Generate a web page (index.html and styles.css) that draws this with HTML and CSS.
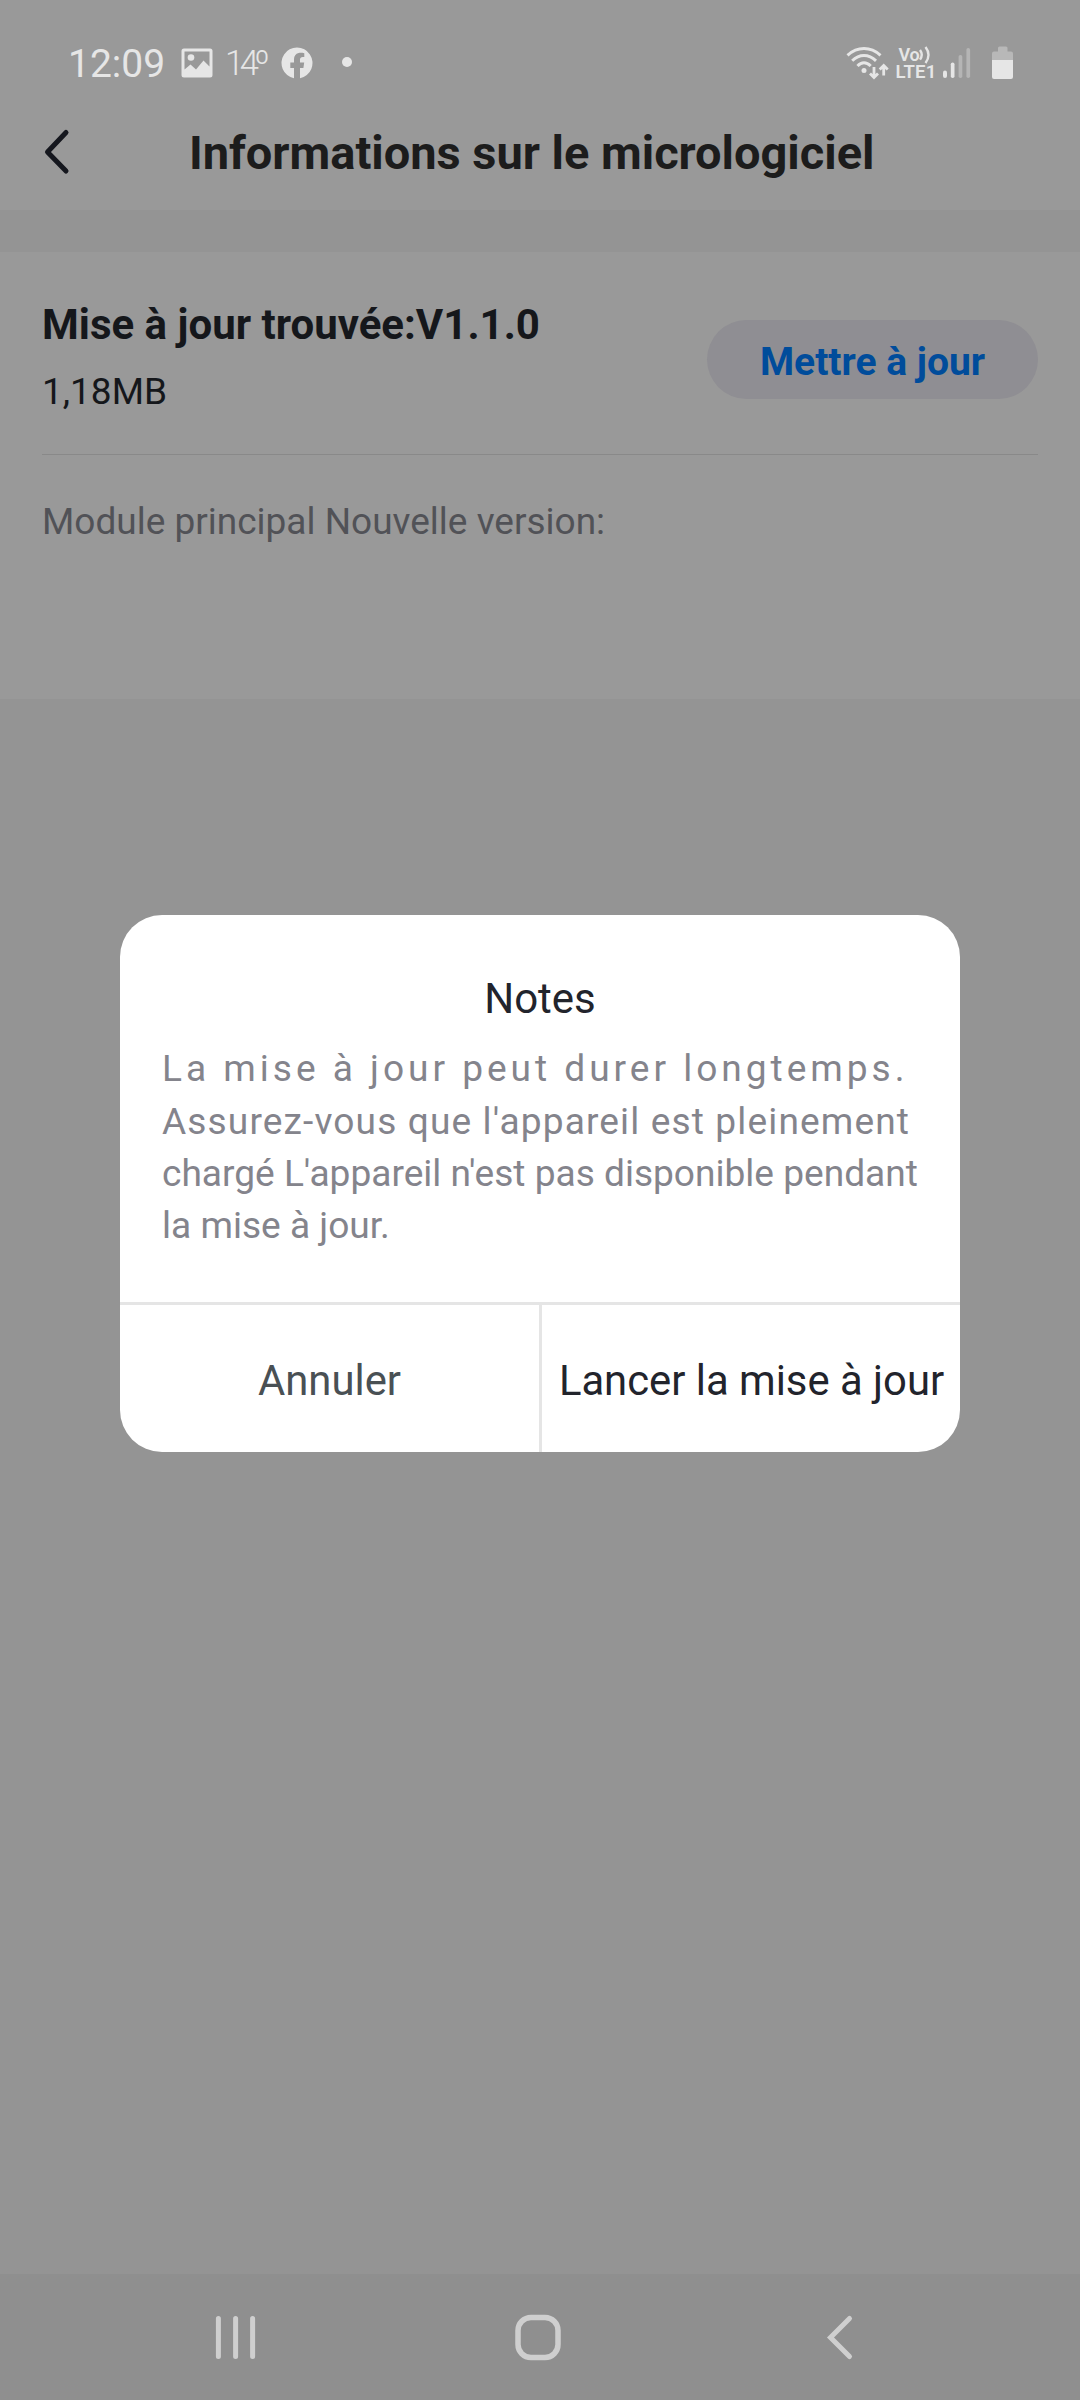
FILE: index.html
```
<!DOCTYPE html>
<html lang="fr">
<head>
<meta charset="utf-8">
<title>Informations sur le micrologiciel</title>
<link rel="stylesheet" href="styles.css">
</head>
<body>
<div class="screen">
  <div class="status">
    <span class="clock">12:09</span>
    <svg class="picture" width="32" height="30" viewBox="0 0 32 30">
      <path fill="currentColor" fill-rule="evenodd" d="M3 .5h26a2.500 2.500 0 0 1 2.500 2.500v24a2.500 2.500 0 0 1-2.500 2.500H3A2.500 2.500 0 0 1 .5 27V3A2.500 2.500 0 0 1 3 .5ZM3.500 3.500V21.500L9.500 16.500L15 21.500L22.500 12.500L28.500 18.500V3.500Z"/>
      <circle cx="10" cy="9.500" r="3.300" fill="currentColor"/>
    </svg>
    <span class="temp">14º</span>
    <svg class="facebook" width="32" height="32" viewBox="0 0 32 32">
      <path fill="currentColor" d="M13 31.200A15.500 15.500 0 1 1 19 31.200V21H22.400L23.200 15.600H19V12.600C19 10.900 20 10 21.700 10H23.300V6.200C21 5.600 18.900 5.700 17.600 6C14.700 6.700 13 9 13 12.200V15.600H9.300V21H13Z"/>
    </svg>
    <span class="dot"></span>
    <svg class="wifi" width="44" height="36" viewBox="0 0 44 36">
      <g fill="none" stroke="currentColor" stroke-width="3">
        <path d="M2.500 11.300Q10 4.500 19 4.500T35.500 11.300M7.200 16.800Q12.500 11.600 19 11.600T31 16.800M12.500 22Q15.500 18.800 19 18.800T25.700 22"/>
        <path stroke-width="2.800" d="M29 23V33M25 29.500L29 33.500L33 29.500M38.700 31.500V21.500M34.700 25.500L38.700 21.500L42.700 25.500"/>
      </g>
      <circle cx="19" cy="26.600" r="2.500" fill="currentColor"/>
    </svg>
    <span class="volte">
      <span class="vo">Vo<svg width="12" height="18" viewBox="0 0 12 18"><path fill="none" stroke="currentColor" stroke-width="2.400" d="M1 4Q4.500 8.800 1 13.600M6.500 1Q12.500 8.800 6.500 17"/></svg></span>
      <span class="lte">LTE1</span>
    </span>
    <svg class="signal" width="28" height="30" viewBox="0 0 28 30">
      <g fill="currentColor"><rect y="22.500" width="4" height="7.500" rx="2"/><rect x="7.800" y="14.500" width="3.700" height="15.500" rx="1.800"/></g>
      <g fill="#b5b5b5"><rect x="15.600" y="7" width="3.700" height="23" rx="1.800"/><rect x="23.400" width="3.700" height="30" rx="1.800"/></g>
    </svg>
    <svg class="battery" width="22" height="34" viewBox="0 0 22 34">
      <path fill="#b8b8b8" d="M6 2Q6 .5 7.500.5H14Q15.500.5 15.500 2V5.500H19Q21 5.500 21 7.500V14H0V7.500Q0 5.500 2 5.500H6Z"/>
      <path fill="currentColor" d="M0 14H21V31Q21 33 19 33H2Q0 33 0 31Z"/>
    </svg>
  </div>

  <header class="header">
    <svg class="back" width="28" height="48" viewBox="0 0 28 48"><path d="M24 4.500L5.500 24L24 43" fill="none" stroke="#15171e" stroke-width="5" stroke-linecap="round" stroke-linejoin="round"/></svg>
    <h1 class="title">Informations sur le micrologiciel</h1>
  </header>

  <main class="card">
    <div class="update">
      <div>
        <h2 class="version">Mise à jour trouvée:V1.1.0</h2>
        <div class="size">1,18MB</div>
      </div>
      <button class="update-btn">Mettre à jour</button>
    </div>
    <div class="module">Module principal Nouvelle version:</div>
  </main>

  <nav class="navbar">
    <svg width="42" height="50" viewBox="0 0 42 50"><path d="M4.400 5.500V43.500M21.600 5.500V43.500M38.600 5.500V43.500" stroke="currentColor" stroke-width="5" stroke-linecap="round"/></svg>
    <svg class="home" width="50" height="50" viewBox="0 0 50 50"><rect x="5" y="4.500" width="40" height="40" rx="13" fill="none" stroke="currentColor" stroke-width="5.500"/></svg>
    <svg width="30" height="50" viewBox="0 0 30 50"><path d="M24.500 5.500L5.500 24.500L24.500 43.500" fill="none" stroke="currentColor" stroke-width="5" stroke-linecap="round"/></svg>
  </nav>

  <div class="dialog" role="dialog">
    <h2 class="dialog-title">Notes</h2>
    <p class="dialog-text"><span class="wide">La mise à jour peut durer longtemps.</span><br><span class="loose">Assurez-vous que l'appareil est pleinement</span><br>chargé L'appareil n'est pas disponible pendant<br>la mise à jour.</p>
    <div class="actions">
      <button class="action cancel">Annuler</button>
      <button class="action confirm">Lancer la mise à jour</button>
    </div>
  </div>
</div>
</body>
</html>
```
FILE: styles.css
```
* { box-sizing: border-box; margin: 0; padding: 0; }
body { font-family: Roboto, "Liberation Sans", sans-serif; }
button { border: 0; background: none; font: inherit; white-space: nowrap; }
svg { display: block; flex: none; }

.screen {
  position: relative;
  display: flex;
  flex-direction: column;
  width: 1080px;
  height: 2400px;
  background: #949494;
}

.status {
  display: flex;
  align-items: flex-start;
  height: 96px;
  padding: 0 66.500px 0 68px;
  background: #999;
  color: #e6e6e6;
}
.clock { width: 113px; margin-top: 41px; font-size: 39px; line-height: 46px; }
.picture { margin-top: 47.500px; }
.temp { width: 56px; margin: 42px 0 0 12px; font-size: 34.500px; font-weight: 300; line-height: 42px; letter-spacing: -4.500px; }
.facebook { margin-top: 47px; }
.dot { width: 10px; height: 10px; margin: 57px 0 0 29px; border-radius: 50%; background: currentColor; }
.wifi { margin: 44px 0 0 auto; }
.volte { display: flex; flex-direction: column; width: 47px; margin: 46px 0 0 7px; font-weight: 600; font-size: 18px; line-height: 17.500px; }
.vo { display: flex; height: 18px; padding-left: 3px; letter-spacing: -.3px; }
.lte { letter-spacing: .2px; font-size: 18.500px; }
.signal { margin-top: 48px; }
.battery { margin: 45.500px 0 0 21px; }

.header {
  display: flex;
  align-items: center;
  height: 114px;
  padding-left: 42px;
  background: #999;
}
.back { margin-top: -2px; }
.title { margin-left: 119px; color: #1c1c1c; font-size: 47px; font-weight: 700; line-height: 56px; letter-spacing: -.02px; }

.card {
  height: 447px;
  margin-top: 42px;
  padding: 0 42px;
  background: #999;
}
.update {
  display: flex;
  justify-content: space-between;
  align-items: flex-start;
  height: 203px;
  padding-top: 48px;
  border-bottom: 1px solid #898989;
}
.version { color: #15171b; font-size: 42px; font-weight: 700; line-height: 50px; }
.size { margin-top: 20px; color: #15171b; font-size: 37px; line-height: 44px; }
.update-btn {
  width: 331px;
  height: 79px;
  margin-top: 20px;
  padding-top: 4px;
  border-radius: 40px;
  background: #8f8e93;
  color: #004c9b;
  font-size: 39px;
  font-weight: 700;
}
.module { padding-top: 45px; color: #515257; font-size: 37px; line-height: 44px; }

.navbar {
  display: flex;
  justify-content: space-between;
  height: 126px;
  margin-top: auto;
  padding: 39px 225px 0 214px;
  background: #8f8f8f;
  color: #cfcfcf;
}
.home { margin-right: 5px; }

.dialog {
  position: absolute;
  top: 915px;
  left: 120px;
  display: flex;
  flex-direction: column;
  width: 840px;
  height: 537px;
  padding-top: 59px;
  border-radius: 42px;
  overflow: hidden;
  background: #fff;
}
.dialog-title { color: #22242c; font-size: 42px; font-weight: 400; line-height: 50px; text-align: center; }
.dialog-text { margin-top: 19.300px; padding-left: 42px; color: #84848c; font-size: 37.100px; line-height: 52.300px; white-space: nowrap; }
.wide { letter-spacing: 3.980px; }
.loose { letter-spacing: 1.130px; }
.actions {
  display: grid;
  grid-template-columns: 422px 418px;
  height: 150px;
  margin-top: auto;
  border-top: 3px solid #e5e5e5;
}
.action { padding-top: 4px; font-size: 41.800px; }
.cancel { border-right: 3px solid #e5e5e5; color: #495054; }
.confirm { padding-left: 1px; color: #22242c; }
```
